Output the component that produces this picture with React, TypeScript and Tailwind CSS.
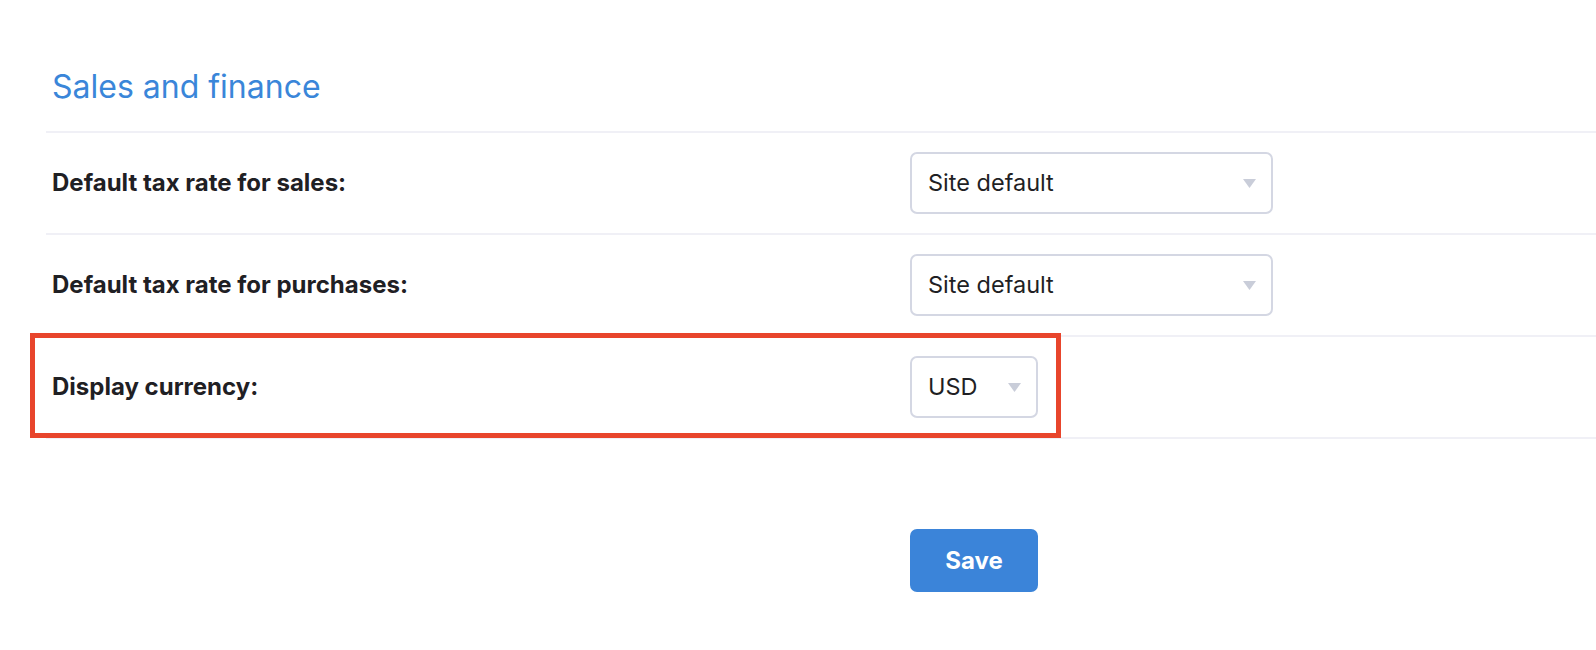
import { ReactNode } from "react";

function Caret() {
    return (
        <svg width="13" height="9" viewBox="0 0 13 9" className="shrink-0">
            <path d="M0 0h13L6.5 9z" fill="#c9cdd9" />
        </svg>
    );
}

function Select({ value, width }: { value: string; width: string }) {
    return (
        <div
            className={`flex h-[62px] items-center justify-between rounded-[7px] border-2 border-[#d4d7e3] bg-white pl-[16px] pr-[15px] text-[23.5px] text-[#1f1f24] ${width}`}
        >
            <span>{value}</span>
            <Caret />
        </div>
    );
}

function Row({ label, children }: { label: string; children: ReactNode }) {
    return (
        <div className="flex h-[102px] items-center border-t-2 border-[#f0f0f6]">
            <div className="w-[864px] shrink-0 pl-[6px] text-[24px] font-bold text-[#1f2024]">
                {label}
            </div>
            {children}
        </div>
    );
}

export default function App() {
    return (
        <div className="relative h-[650px] w-full overflow-hidden bg-white pl-[46px] font-['Inter',sans-serif]">
            <h2 className="mb-[25px] pl-[6px] pt-[68px] text-[32px] leading-[38px] font-normal text-[#3a86d9]">
                Sales and finance
            </h2>

            <div className="border-b-2 border-[#f0f0f6]">
                <Row label="Default tax rate for sales:">
                    <Select value="Site default" width="w-[363px]" />
                </Row>
                <Row label="Default tax rate for purchases:">
                    <Select value="Site default" width="w-[363px]" />
                </Row>
                <Row label="Display currency:">
                    <Select value="USD" width="w-[128px]" />
                </Row>
            </div>

            <div className="mt-[90px] pl-[864px]">
                <button className="h-[63px] w-[128px] rounded-[7px] bg-[#3b84d9] text-[24px] font-bold text-white">
                    Save
                </button>
            </div>

            {/* annotation box round the currency row */}
            <div className="pointer-events-none absolute left-[30px] top-[333px] h-[105px] w-[1031px] border-[5px] border-[#e8452c]" />
        </div>
    );
}
